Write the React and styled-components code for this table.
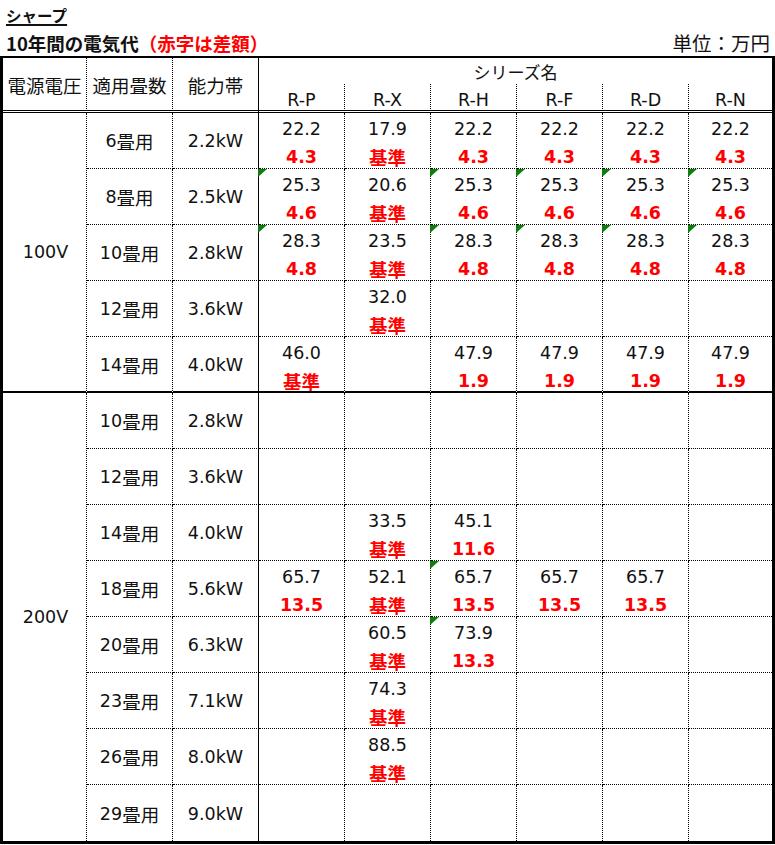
import React from 'react';
import styled, { createGlobalStyle, css } from 'styled-components';

const GlobalStyle = createGlobalStyle`
  html, body { margin: 0; padding: 0; background: #fff; }
  body {
    font-family: "DejaVu Sans", "Noto Sans CJK JP", sans-serif;
    color: #111;
  }
`;

const Page = styled.div`
  width: 775px;
`;

const Heading = styled.header`
  box-sizing: border-box;
  height: 56px;
  padding: 3px 6px 0 6px;
  font-family: "Noto Sans CJK JP", sans-serif;
  color: #111;
`;

const Brand = styled.div`
  display: inline-block;
  font-size: 15.5px;
  font-weight: 700;
  line-height: 24px;
  text-decoration: underline;
  text-decoration-thickness: 2px;
  text-underline-offset: 2px;
`;

const SubRow = styled.div`
  display: flex;
  justify-content: space-between;
  align-items: flex-end;
  margin-top: 3px;
  line-height: 26px;
`;

const SubTitle = styled.div`
  font-size: 18.5px;
  font-weight: 700;
`;

const Red = styled.span`
  color: #ff0000;
`;

const Unit = styled.div`
  font-size: 19.5px;
  font-weight: 400;
  margin-right: -1px;
`;

const Grid = styled.div`
  display: grid;
  grid-template-columns: 84px repeat(7, 86px) 83px;
  grid-template-rows: 26px 29px repeat(13, 56px);
  border-style: solid;
  border-color: #000;
  border-width: 2px 3px 3px 3px;
`;

const rightBorder = (r) =>
  r === 'solid' ? '1px solid #000' : r === 'none' ? '0' : '1px dotted #000';

const bottomBorder = (b) =>
  b === 'section'
    ? '2px solid #000'
    : b === 'table'
    ? '0'
    : b === 'head'
    ? '3px double #000'
    : b === 'none'
    ? '0'
    : '1px dotted #000';

const cellBase = css`
  box-sizing: border-box;
  position: relative;
  min-width: 0;
  border-right: ${(p) => rightBorder(p.$right)};
  border-bottom: ${(p) => bottomBorder(p.$bottom)};
  font-size: 17.5px;
  color: #111;
`;

const HeadCell = styled.div`
  ${cellBase}
  grid-row: span 2;
  display: flex;
  align-items: center;
  justify-content: center;
  padding-top: 2px;
`;

const SeriesTitle = styled.div`
  ${cellBase}
  grid-column: span 6;
  display: flex;
  align-items: center;
  justify-content: center;
  font-family: "Noto Sans CJK JP", sans-serif;
  font-size: 17px;
`;

const SeriesCell = styled.div`
  ${cellBase}
  display: flex;
  align-items: flex-end;
  justify-content: center;
  line-height: 20px;
`;

const VoltCell = styled.div`
  ${cellBase}
  grid-row: span ${(p) => p.$rows};
  display: flex;
  align-items: center;
  justify-content: center;
  padding-left: 2px;
`;

const LabelCell = styled.div`
  ${cellBase}
  display: flex;
  align-items: center;
  justify-content: center;
  padding-top: 1px;
`;

const ValueCell = styled.div`
  ${cellBase}
  display: flex;
  flex-direction: column;
  align-items: center;
  padding-top: 2px;
  line-height: 28px;
`;

const Amount = styled.span`
  display: block;
  height: 28px;
`;

const Diff = styled.span`
  display: block;
  height: 28px;
  color: #ff0000;
  font-weight: 700;
`;

const Wide = styled.span`
  font-family: "Noto Sans CJK JP", sans-serif;
  font-size: 18.5px;
`;

const Marker = styled.span`
  position: absolute;
  top: 0;
  left: -1px;
  width: 9px;
  height: 8px;
  background: #0a800a;
  clip-path: polygon(0 0, 100% 0, 0 100%);
`;

const CJK_SPLIT = /([\u3000-\u30ff\u3400-\u9fff\uff00-\uffef]+)/;

function Mixed({ text }) {
  const parts = text.split(CJK_SPLIT);
  return parts.map((p, i) => (i % 2 ? <Wide key={i}>{p}</Wide> : p || null));
}

const series = ['R-P', 'R-X', 'R-H', 'R-F', 'R-D', 'R-N'];

const v = (amount, diff, mark = false) => ({ amount, diff, mark });
const E = null;

const sections = [
  {
    voltage: '100V',
    rows: [
      ['6畳用', '2.2kW', [v('22.2', '4.3'), v('17.9', '基準'), v('22.2', '4.3'), v('22.2', '4.3'), v('22.2', '4.3'), v('22.2', '4.3')]],
      ['8畳用', '2.5kW', [v('25.3', '4.6', true), v('20.6', '基準'), v('25.3', '4.6', true), v('25.3', '4.6', true), v('25.3', '4.6', true), v('25.3', '4.6', true)]],
      ['10畳用', '2.8kW', [v('28.3', '4.8', true), v('23.5', '基準'), v('28.3', '4.8', true), v('28.3', '4.8', true), v('28.3', '4.8', true), v('28.3', '4.8', true)]],
      ['12畳用', '3.6kW', [E, v('32.0', '基準'), E, E, E, E]],
      ['14畳用', '4.0kW', [v('46.0', '基準'), E, v('47.9', '1.9'), v('47.9', '1.9'), v('47.9', '1.9'), v('47.9', '1.9')]],
    ],
    end: 'section',
  },
  {
    voltage: '200V',
    rows: [
      ['10畳用', '2.8kW', [E, E, E, E, E, E]],
      ['12畳用', '3.6kW', [E, E, E, E, E, E]],
      ['14畳用', '4.0kW', [E, v('33.5', '基準'), v('45.1', '11.6'), E, E, E]],
      ['18畳用', '5.6kW', [v('65.7', '13.5'), v('52.1', '基準'), v('65.7', '13.5', true), v('65.7', '13.5'), v('65.7', '13.5'), E]],
      ['20畳用', '6.3kW', [E, v('60.5', '基準'), v('73.9', '13.3', true), E, E, E]],
      ['23畳用', '7.1kW', [E, v('74.3', '基準'), E, E, E, E]],
      ['26畳用', '8.0kW', [E, v('88.5', '基準'), E, E, E, E]],
      ['29畳用', '9.0kW', [E, E, E, E, E, E]],
    ],
    end: 'table',
  },
];

export default function App() {
  return (
    <Page>
      <GlobalStyle />
      <Heading>
        <Brand>シャープ</Brand>
        <SubRow>
          <SubTitle>
            10年間の電気代<Red>（赤字は差額）</Red>
          </SubTitle>
          <Unit>単位：万円</Unit>
        </SubRow>
      </Heading>
      <Grid>
        <HeadCell $bottom="head"><Mixed text="電源電圧" /></HeadCell>
        <HeadCell $bottom="head"><Mixed text="適用畳数" /></HeadCell>
        <HeadCell $bottom="head" $right="solid"><Mixed text="能力帯" /></HeadCell>
        <SeriesTitle $right="none" $bottom="none">シリーズ名</SeriesTitle>
        {series.map((s, i) => (
          <SeriesCell key={s} $bottom="head" $right={i === series.length - 1 ? 'none' : undefined}>
            {s}
          </SeriesCell>
        ))}
        {sections.map((sec) => (
          <React.Fragment key={sec.voltage}>
            <VoltCell $rows={sec.rows.length} $bottom={sec.end}>
              {sec.voltage}
            </VoltCell>
            {sec.rows.map(([size, power, values], ri) => {
              const bottom = ri === sec.rows.length - 1 ? sec.end : undefined;
              return (
                <React.Fragment key={size}>
                  <LabelCell $bottom={bottom}><Mixed text={size} /></LabelCell>
                  <LabelCell $bottom={bottom} $right="solid">{power}</LabelCell>
                  {values.map((val, ci) => (
                    <ValueCell
                      key={ci}
                      $bottom={bottom}
                      $right={ci === values.length - 1 ? 'none' : undefined}
                    >
                      {val && val.mark && <Marker />}
                      {val && <Amount>{val.amount}</Amount>}
                      {val && (
                        <Diff>
                          <Mixed text={val.diff} />
                        </Diff>
                      )}
                    </ValueCell>
                  ))}
                </React.Fragment>
              );
            })}
          </React.Fragment>
        ))}
      </Grid>
    </Page>
  );
}
